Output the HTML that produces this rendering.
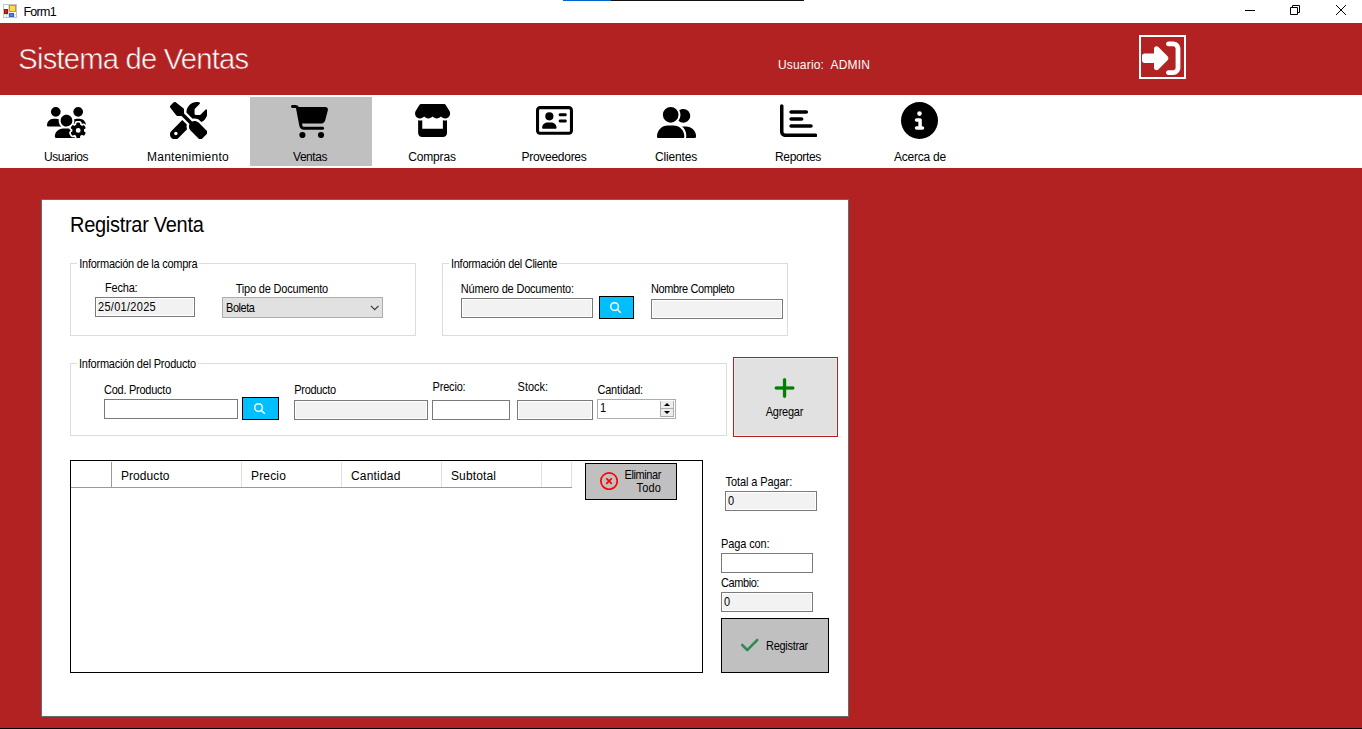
<!DOCTYPE html>
<html lang="es">
<head>
<meta charset="utf-8">
<title>Form1</title>
<style>
*{box-sizing:border-box;margin:0;padding:0}
html,body{width:1362px;height:729px;overflow:hidden;background:#b22222;font-family:"Liberation Sans",sans-serif;color:#000}
#win{position:absolute;left:0;top:0;width:1362px;height:729px;background:#b22222;overflow:hidden}
#win div,#win svg,#win i,#win b{position:absolute;display:block}
.t{white-space:pre}
#titlebar{left:0;top:0;width:1362px;height:23px;background:#fff}
.appico{left:3px;top:4px;width:14px;height:14px;border:1px solid #c2c2c2;background:#fff}
.appico .a{left:5px;top:0;width:7px;height:7px;background:#ffd65c;border:1px solid #c99a14}
.appico .b{left:0;top:4px;width:4px;height:5px;background:#c4281c;border:1px solid #a01208}
.appico .c{left:5px;top:8px;width:5px;height:4px;background:#4f86e0;border:1px solid #2f63c4}
.appico .d{left:4px;top:0;width:1px;height:12px;background:#d9d9d9}
.appico .e{left:0;top:9px;width:12px;height:1px;background:#dcdcdc}
.appico .f{left:2px;top:9px;width:9px;height:3px;border-left:1px solid #dcdcdc;border-right:1px solid #dcdcdc}
.tabline{left:563px;top:0;width:241px;height:1px;background:#111}
.tabline i{left:0;top:0;width:48px;height:1px;background:#0066cc}
#logout{left:1139px;top:35px;width:47px;height:44px;border:2px solid #fff}
#menu{left:0;top:95px;width:1362px;height:73px;background:#fff}
#sel{left:250px;top:97px;width:122px;height:69px;background:#c0c0c0}
#panel{left:41px;top:199px;width:808px;height:518px;background:#fff;border:1px solid #646c6d}
.gb{border:1px solid #dcdcdc}
.gbm{background:#fff}
.inp{border:1px solid #7a7a7a;background:#fff}
.inp.dis{background:#f2f2f2;box-shadow:inset 0 0 0 1px #fff}
.inp.nud{border-color:#abadb3}
.combo{background:#e1e1e1;border:1px solid #adadad}
.sbtn{background:#00bfff;border:1px solid #000}
.spin{background:#ededed;border-left:1px solid #adadad;border-right:1px solid #adadad;border-bottom:1px solid #adadad}
.spin b{left:0;top:7px;width:12px;height:1px;background:#adadad}
.spin i{left:3px;width:0;height:0;border-left:3px solid transparent;border-right:3px solid transparent}
.spin .u{top:2px;border-bottom:3px solid #000}
.spin .d{top:10px;border-top:3px solid #000}
.bigbtn{background:#e1e1e1;border:1px solid #b22222;box-shadow:inset 0 0 0 1px #e8ecec}
.gbtn{background:#c0c0c0;border:1px solid #000}
.grid{border:1px solid #000;background:#fff}
.grid .gh{left:0;top:0;width:501px;height:27px;border-bottom:1px solid #9a9a9a;background:#fff}
.grid i{top:1px;width:1px;height:25px;background:#e0e0e0}
.grid i:first-of-type{background:#9a9a9a}
#bottomline{left:0;top:728px;width:1362px;height:1px;background:#000}
</style>
</head>
<body>
<div id="win">
<div id="titlebar">
<div class="appico"><b class="d"></b><b class="e"></b><b class="f"></b><b class="a"></b><b class="b"></b><b class="c"></b></div>
<div class="tabline"><i></i></div>
<svg class="wc" style="left:1244px;top:4px;width:110px;height:14px" viewBox="0 0 110 14" fill="none" stroke="#000" stroke-width="1"><path d="M1 6.500H11"/><path d="M46.500 3.500V10.500H53.500V3.500ZM48.500 3.500V1.500H55.500V8.500H53.500"/><path d="M92 1L102 11M102 1L92 11"/></svg>
</div>
<div id="logout"></div>
<svg viewBox="0 0 512 512" style="left:1142.3px;top:39.3px;width:38.4px;height:38.4px" fill="#fff" ><path d="M217.900 105.900L340.700 228.700c7.200 7.200 11.300 17.100 11.300 27.300s-4.100 20.100-11.300 27.300L217.900 406.100c-6.400 6.400-15 9.900-24 9.900c-18.700 0-33.900-15.200-33.900-33.900l0-62.100L32 320c-17.700 0-32-14.300-32-32l0-64c0-17.700 14.300-32 32-32l128 0 0-62.100c0-18.700 15.200-33.900 33.900-33.900c9 0 17.600 3.600 24 9.900zM352 416l64 0c17.700 0 32-14.300 32-32l0-256c0-17.700-14.300-32-32-32l-64 0c-17.700 0-32-14.300-32-32s14.300-32 32-32l64 0c53 0 96 43 96 96l0 256c0 53-43 96-96 96l-64 0c-17.700 0-32-14.300-32-32s14.300-32 32-32z"/></svg>
<div id="menu"></div>
<div id="sel"></div>
<svg viewBox="0 0 640 512" style="left:46.7px;top:106.5px;width:39px;height:31.2px" fill="#000" ><path d="M144 160A80 80 0 1 0 144 0a80 80 0 1 0 0 160zm368 0A80 80 0 1 0 512 0a80 80 0 1 0 0 160zM0 298.700C0 310.400 9.600 320 21.300 320H234.700c.2 0 .4 0 .7 0c-26.600-23.500-43.300-57.800-43.300-96c0-7.600 .7-15 1.900-22.300c-13.600-6.300-28.700-9.700-44.600-9.700H106.700C47.800 192 0 239.800 0 298.700zM320 320c24 0 45.900-8.800 62.700-23.300c2.500-3.700 5.200-7.300 8-10.700c2.700-3.300 5.700-6.100 9-8.300C410 262.300 416 243.900 416 224c0-53-43-96-96-96s-96 43-96 96s43 96 96 96zm65.400 60.200c-10.300-5.900-18.100-16.200-20.800-28.200H261.300C187.700 352 128 411.700 128 485.300c0 14.700 11.900 26.700 26.700 26.700H455.200c-2.100-5.200-3.200-10.900-3.200-16.400v-3c-1.300-.7-2.700-1.500-4-2.300l-2.600 1.500c-16.800 9.700-40.500 8-54.700-9.700c-4.500-5.600-8.600-11.500-12.400-17.600l-.1-.2-.1-.2-2.400-4.100-.1-.2-.1-.2c-3.400-6.200-6.400-12.600-9-19.300c-8.200-21.200 2.200-42.600 19-52.300l2.700-1.500c0-.8 0-1.500 0-2.300s0-1.500 0-2.300l-2.700-1.500zM533.300 192H490.700c-15.900 0-31 3.500-44.600 9.700c1.300 7.200 1.900 14.700 1.900 22.300c0 17.400-3.500 33.900-9.700 49c2.500 .9 4.900 2 7.100 3.300l2.600 1.500c1.300-.8 2.600-1.600 4-2.300v-3c0-19.400 13.300-39.100 35.800-42.600c7.900-1.200 16-1.900 24.200-1.900s16.300 .6 24.200 1.900c22.500 3.500 35.800 23.200 35.800 42.600v3c1.300 .7 2.700 1.500 4 2.300l2.600-1.500c16.800-9.700 40.500-8 54.700 9.700c2.300 2.800 4.500 5.800 6.600 8.700c-2.100-57.100-49-102.700-106.600-102.700zm91.300 163.900c6.300-3.600 9.500-11.100 6.800-18c-2.100-5.500-4.600-10.800-7.400-15.900l-2.300-4c-3.100-5.100-6.500-9.900-10.200-14.500c-4.600-5.700-12.700-6.700-19-3L574.400 311c-8.900-7.600-19.100-13.600-30.400-17.600v-21c0-7.300-4.900-13.800-12.100-14.900c-6.500-1-13.100-1.500-19.900-1.500s-13.400 .5-19.900 1.500c-7.200 1.100-12.100 7.600-12.100 14.900v21c-11.200 4-21.500 10-30.400 17.600l-18.200-10.500c-6.300-3.600-14.400-2.600-19 3c-3.700 4.600-7.100 9.500-10.200 14.600l-2.300 3.900c-2.800 5.100-5.300 10.400-7.400 15.900c-2.600 6.800 .5 14.300 6.800 17.900l18.200 10.500c-1 5.700-1.600 11.600-1.600 17.600s.6 11.900 1.600 17.500l-18.200 10.500c-6.300 3.600-9.500 11.100-6.800 17.900c2.100 5.500 4.600 10.700 7.400 15.800l2.400 4.100c3 5.100 6.400 9.900 10.100 14.500c4.600 5.700 12.700 6.700 19 3L449.600 457c8.900 7.600 19.200 13.600 30.400 17.600v21c0 7.300 4.900 13.800 12.100 14.900c6.500 1 13.100 1.500 19.900 1.500s13.400-.5 19.900-1.500c7.200-1.100 12.100-7.600 12.100-14.900v-21c11.200-4 21.500-10 30.400-17.600l18.200 10.500c6.300 3.600 14.400 2.600 19-3c3.700-4.600 7.100-9.400 10.100-14.500l2.400-4.200c2.800-5.100 5.300-10.300 7.400-15.800c2.600-6.800-.5-14.300-6.800-17.900l-18.200-10.500c1-5.700 1.600-11.600 1.600-17.500s-.6-11.900-1.600-17.600l18.200-10.500zM472 384a40 40 0 1 1 80 0 40 40 0 1 1 -80 0z"/></svg>
<svg viewBox="0 0 512 512" style="left:169.58px;top:101.78px;width:37.45px;height:37.45px" fill="#000" ><path d="M78.6 5C69.1-2.4 55.600-1.500 47 7L7 47c-8.500 8.500-9.400 22-2.100 31.600l80 104c4.500 5.900 11.600 9.400 19 9.400h54.100l109 109c-14.700 29-10 65.400 14.300 89.600l112 112c12.500 12.500 32.800 12.500 45.300 0l64-64c12.500-12.500 12.500-32.800 0-45.300l-112-112c-24.200-24.200-60.600-29-89.600-14.300l-109-109V104c0-7.500-3.500-14.500-9.400-19L78.600 5zM19.900 396.100C7.200 408.800 0 426.100 0 444.100C0 481.600 30.400 512 67.900 512c18 0 35.300-7.200 48-19.900L233.700 374.300c-7.800-20.900-9-43.600-3.600-65.100l-61.700-61.700L19.900 396.100zM512 144c0-10.500-1.100-20.700-3.200-30.500c-2.400-11.200-16.100-14.100-24.200-6l-63.900 63.900c-3 3-7.100 4.700-11.300 4.700H352c-8.800 0-16-7.200-16-16V102.600c0-4.200 1.700-8.300 4.700-11.300l63.900-63.900c8.100-8.100 5.200-21.800-6-24.200C388.700 1.100 378.500 0 368 0C288.500 0 224 64.500 224 144l0 .8 85.300 85.300c36-9.100 75.800 .5 104 28.700L429 274.500c49-23 83-72.800 83-130.500zM56 432a24 24 0 1 1 48 0 24 24 0 1 1 -48 0z"/></svg>
<svg viewBox="0 0 576 512" style="left:291.05px;top:104.7px;width:37.3px;height:33.1px" fill="#000" ><path d="M0 24C0 10.700 10.700 0 24 0H69.500c22 0 41.500 12.800 50.600 32h411c26.300 0 45.500 25 38.600 50.400l-41 152.300c-8.500 31.400-37 53.300-69.500 53.300H170.700l5.400 28.500c2.200 11.300 12.100 19.500 23.600 19.500H488c13.300 0 24 10.700 24 24s-10.700 24-24 24H199.700c-34.600 0-64.300-24.600-70.700-58.500L77.400 54.500c-.7-3.800-4-6.500-7.900-6.500H24C10.700 48 0 37.300 0 24zM128 464a48 48 0 1 1 96 0 48 48 0 1 1 -96 0zm336-48a48 48 0 1 1 0 96 48 48 0 1 1 0-96z"/></svg>
<svg viewBox="0 0 576 512" style="left:414.03px;top:104.15px;width:37.15px;height:33.0px" fill="#000" ><path d="M547.600 103.800L490.300 13.100C485.200 5 476.100 0 466.400 0H109.600C99.900 0 90.800 5 85.700 13.100L28.300 103.800c-29.600 46.800-3.400 111.900 51.900 119.400c4 .5 8.100 .8 12.100 .8c26.100 0 49.300-11.400 65.200-29c15.900 17.600 39.100 29 65.200 29c26.100 0 49.300-11.400 65.200-29c15.900 17.600 39.100 29 65.200 29c26.200 0 49.300-11.400 65.200-29c16 17.600 39.100 29 65.200 29c4.100 0 8.100-.3 12.100-.8c55.500-7.400 81.800-72.500 52.100-119.400zM499.700 254.900l-.1 0c-5.300 .7-10.700 1.100-16.200 1.100c-12.400 0-24.300-1.900-35.400-5.300V384H128V250.600c-11.200 3.500-23.200 5.400-35.600 5.400c-5.500 0-11-.4-16.300-1.100l-.1 0c-4.100-.6-8.100-1.300-12-2.300V384v64c0 35.300 28.700 64 64 64H448c35.300 0 64-28.700 64-64V384 252.600c-4 1-8 1.800-12.300 2.300z"/></svg>
<svg viewBox="0 0 576 512" style="left:535.85px;top:104.2px;width:37px;height:32.9px" fill="#000" ><path d="M512 80c8.800 0 16 7.200 16 16V416c0 8.800-7.200 16-16 16H64c-8.800 0-16-7.200-16-16V96c0-8.800 7.200-16 16-16H512zM64 32C28.700 32 0 60.700 0 96V416c0 35.300 28.700 64 64 64H512c35.300 0 64-28.700 64-64V96c0-35.300-28.700-64-64-64H64zM208 256a64 64 0 1 0 0-128 64 64 0 1 0 0 128zm-32 32c-44.200 0-80 35.800-80 80c0 8.800 7.200 16 16 16H304c8.800 0 16-7.200 16-16c0-44.200-35.800-80-80-80H176zM376 144c-13.300 0-24 10.700-24 24s10.700 24 24 24h80c13.300 0 24-10.700 24-24s-10.700-24-24-24H376zm0 96c-13.300 0-24 10.700-24 24s10.700 24 24 24h80c13.300 0 24-10.700 24-24s-10.700-24-24-24H376z"/></svg>
<svg viewBox="0 0 640 512" style="left:656.65px;top:106.55px;width:39.1px;height:31.3px" fill="#000" ><path d="M96 128a128 128 0 1 1 256 0A128 128 0 1 1 96 128zM0 482.300C0 383.800 79.800 304 178.300 304h91.400C368.200 304 448 383.800 448 482.300c0 16.400-13.300 29.700-29.700 29.700H29.700C13.300 512 0 498.700 0 482.300zM609.300 512H471.400c5.400-9.400 8.600-20.300 8.600-32v-8c0-60.700-27.100-115.200-69.800-151.800c2.400-.1 4.700-.2 7.100-.2h61.400C567.800 320 640 392.200 640 481.300c0 17-13.800 30.700-30.700 30.700zM432 256c-31 0-59-12.600-79.300-32.900C372.400 196.500 384 163.600 384 128c0-26.800-6.600-52.100-18.300-74.300C384.300 40.100 407.200 32 432 32c61.900 0 112 50.100 112 112s-50.100 112-112 112z"/></svg>
<svg viewBox="0 0 512 512" style="left:779.7px;top:101.8px;width:37.4px;height:37.4px" fill="#000" ><path d="M24 32c13.300 0 24 10.700 24 24V408c0 13.300 10.700 24 24 24H488c13.300 0 24 10.700 24 24s-10.700 24-24 24H72c-39.800 0-72-32.200-72-72V56C0 42.700 10.700 32 24 32zM128 136c0-13.300 10.700-24 24-24l208 0c13.300 0 24 10.700 24 24s-10.700 24-24 24l-208 0c-13.300 0-24-10.700-24-24zm24 72H296c13.300 0 24 10.700 24 24s-10.700 24-24 24H152c-13.300 0-24-10.700-24-24s10.700-24 24-24zm0 96H424c13.300 0 24 10.700 24 24s-10.700 24-24 24H152c-13.300 0-24-10.700-24-24s10.700-24 24-24z"/></svg>
<svg viewBox="0 0 512 512" style="left:901.2px;top:102.0px;width:37px;height:37px" fill="#000" ><path d="M256 512A256 256 0 1 0 256 0a256 256 0 1 0 0 512zM216 336h24V272H216c-13.300 0-24-10.700-24-24s10.700-24 24-24h48c13.300 0 24 10.700 24 24v88h8c13.300 0 24 10.700 24 24s-10.700 24-24 24H216c-13.300 0-24-10.700-24-24s10.700-24 24-24zm40-208a32 32 0 1 1 0 64 32 32 0 1 1 0-64z"/></svg>
<div id="panel"></div>
<div class="gb" style="left:70px;top:263px;width:346px;height:73px"></div>
<div class="gbm" style="left:77.3px;top:263px;width:122px;height:1px"></div>
<div class="inp dis " style="left:95px;top:297px;width:100px;height:20px"></div>
<div class="combo" style="left:222px;top:297px;width:161px;height:21px"></div>
<svg style="left:369.500px;top:305px;width:10px;height:6px" viewBox="0 0 10 6" fill="none" stroke="#3c3c3c" stroke-width="1.25"><path d="M0.900 0.900L4.700 4.700L8.500 0.900"/></svg>
<div class="gb" style="left:442px;top:263px;width:346px;height:73px"></div>
<div class="gbm" style="left:449px;top:263px;width:110px;height:1px"></div>
<div class="inp dis " style="left:461px;top:298px;width:132px;height:20px"></div>
<div class="sbtn" style="left:599px;top:296px;width:35px;height:23px"></div>
<svg viewBox="0 0 512 512" style="left:610.4px;top:301.9px;width:11.2px;height:11.2px" fill="#fff" stroke="#fff" stroke-width="3"><path d="M416 208c0 45.900-14.900 88.300-40 122.700L502.600 457.400c12.500 12.500 12.500 32.800 0 45.300s-32.800 12.500-45.300 0L330.700 376c-34.400 25.200-76.800 40-122.700 40C93.100 416 0 322.900 0 208S93.100 0 208 0S416 93.100 416 208zM208 352a144 144 0 1 0 0-288 144 144 0 1 0 0 288z"/></svg>
<div class="inp dis " style="left:651px;top:299px;width:132px;height:20px"></div>
<div class="gb" style="left:70px;top:363px;width:657px;height:73px"></div>
<div class="gbm" style="left:77px;top:363px;width:121px;height:1px"></div>
<div class="inp " style="left:104px;top:399px;width:134px;height:20px"></div>
<div class="sbtn" style="left:242px;top:397px;width:37px;height:23px"></div>
<svg viewBox="0 0 512 512" style="left:254.4px;top:402.9px;width:11.2px;height:11.2px" fill="#fff" stroke="#fff" stroke-width="3"><path d="M416 208c0 45.900-14.900 88.300-40 122.700L502.600 457.400c12.500 12.500 12.500 32.800 0 45.300s-32.800 12.500-45.300 0L330.700 376c-34.400 25.200-76.800 40-122.700 40C93.100 416 0 322.900 0 208S93.100 0 208 0S416 93.100 416 208zM208 352a144 144 0 1 0 0-288 144 144 0 1 0 0 288z"/></svg>
<div class="inp dis " style="left:294px;top:400px;width:134px;height:20px"></div>
<div class="inp " style="left:432px;top:400px;width:78px;height:20px"></div>
<div class="inp dis " style="left:517px;top:400px;width:76px;height:20px"></div>
<div class="inp nud" style="left:597px;top:399px;width:79px;height:20px"></div>
<div class="spin" style="left:660px;top:401px;width:14px;height:16px"><b></b><i class="u"></i><i class="d"></i></div>
<div class="bigbtn" style="left:733px;top:357px;width:105px;height:80px"></div>
<svg viewBox="0 0 448 512" style="left:773.9px;top:376.25px;width:21.1px;height:24.1px" fill="#008000" stroke="#008000" stroke-width="6"><path d="M256 80c0-17.700-14.300-32-32-32s-32 14.300-32 32V224H48c-17.700 0-32 14.300-32 32s14.300 32 32 32H192V432c0 17.700 14.300 32 32 32s32-14.300 32-32V288H400c17.700 0 32-14.300 32-32s-14.300-32-32-32H256V80z"/></svg>
<div class="grid" style="left:70px;top:460px;width:633px;height:213px"><div class="gh"></div><i style="left:40px"></i><i style="left:170px"></i><i style="left:270px"></i><i style="left:370px"></i><i style="left:470px"></i><i style="left:500px" class="last"></i></div>
<div class="gbtn" style="left:585px;top:463px;width:92px;height:37px"></div>
<svg viewBox="0 0 512 512" style="left:600.35px;top:471.55px;width:18.1px;height:18.1px" fill="#ff0000" ><path d="M256 48a208 208 0 1 1 0 416 208 208 0 1 1 0-416zm0 464A256 256 0 1 0 256 0a256 256 0 1 0 0 512zM175 175c-9.400 9.400-9.400 24.600 0 33.900l47 47-47 47c-9.400 9.400-9.400 24.600 0 33.900s24.600 9.400 33.900 0l47-47 47 47c9.400 9.400 24.600 9.400 33.900 0s9.400-24.600 0-33.900l-47-47 47-47c9.400-9.400 9.400-24.600 0-33.900s-24.600-9.400-33.900 0l-47 47-47-47c-9.400-9.400-24.600-9.400-33.900 0z"/></svg>
<div class="inp dis " style="left:725px;top:491px;width:92px;height:20px"></div>
<div class="inp " style="left:721px;top:553px;width:92px;height:20px"></div>
<div class="inp dis " style="left:721px;top:592px;width:92px;height:20px"></div>
<div class="gbtn" style="left:721px;top:618px;width:108px;height:55px"></div>
<svg viewBox="0 0 448 512" style="left:741.3px;top:635.1px;width:17.5px;height:20px" fill="#2e8b57" ><path d="M438.600 105.400c12.500 12.500 12.500 32.800 0 45.300l-256 256c-12.500 12.500-32.800 12.500-45.300 0l-128-128c-12.500-12.500-12.500-32.800 0-45.300s32.800-12.500 45.300 0L160 338.700 393.400 105.400c12.500-12.500 32.800-12.500 45.300 0z"/></svg>
<div id="bottomline"></div>
<div class="t" style="top:6.22px;font-size:12.5px;line-height:12.5px;color:#000;letter-spacing:-0.705px;left:23.4px;">Form1</div>
<div class="t" style="top:44.73px;font-size:29.2px;line-height:29.2px;color:#fff;-webkit-text-stroke:0.55px #b22222;letter-spacing:-0.788px;left:18.3px;">Sistema de Ventas</div>
<div class="t" style="top:58.84px;font-size:12px;line-height:12px;color:#fff;letter-spacing:0.176px;left:778px;">Usuario:  ADMIN</div>
<div class="t" style="top:150.84px;font-size:12px;line-height:12px;color:#000;letter-spacing:-0.420px;left:-134px;width:400px;text-align:center;">Usuarios</div>
<div class="t" style="top:150.84px;font-size:12px;line-height:12px;color:#000;letter-spacing:0.252px;left:-12px;width:400px;text-align:center;">Mantenimiento</div>
<div class="t" style="top:150.84px;font-size:12px;line-height:12px;color:#000;letter-spacing:-0.451px;left:110px;width:400px;text-align:center;">Ventas</div>
<div class="t" style="top:150.84px;font-size:12px;line-height:12px;color:#000;letter-spacing:-0.170px;left:232px;width:400px;text-align:center;">Compras</div>
<div class="t" style="top:150.84px;font-size:12px;line-height:12px;color:#000;letter-spacing:-0.277px;left:354px;width:400px;text-align:center;">Proveedores</div>
<div class="t" style="top:150.84px;font-size:12px;line-height:12px;color:#000;letter-spacing:-0.170px;left:476px;width:400px;text-align:center;">Clientes</div>
<div class="t" style="top:150.84px;font-size:12px;line-height:12px;color:#000;letter-spacing:-0.338px;left:598px;width:400px;text-align:center;">Reportes</div>
<div class="t" style="top:150.84px;font-size:12px;line-height:12px;color:#000;letter-spacing:-0.226px;left:720px;width:400px;text-align:center;">Acerca de</div>
<div class="t" style="top:215.37px;font-size:20px;line-height:20px;color:#000;letter-spacing:-0.291px;transform:scaleY(1.06);transform-origin:0 84.65%;left:70px;">Registrar Venta</div>
<div class="t" style="top:259.04px;font-size:11px;line-height:11px;color:#000;letter-spacing:-0.255px;transform:scaleY(1.12);transform-origin:0 84.65%;left:79.3px;">Información de la compra</div>
<div class="t" style="top:283.04px;font-size:11px;line-height:11px;color:#000;letter-spacing:-0.190px;transform:scaleY(1.12);transform-origin:0 84.65%;left:105px;">Fecha:</div>
<div class="t" style="top:302.04px;font-size:11px;line-height:11px;color:#000;letter-spacing:0.294px;transform:scaleY(1.12);transform-origin:0 84.65%;left:98px;">25/01/2025</div>
<div class="t" style="top:284.04px;font-size:11px;line-height:11px;color:#000;letter-spacing:-0.194px;transform:scaleY(1.12);transform-origin:0 84.65%;left:235.7px;">Tipo de Documento</div>
<div class="t" style="top:303.04px;font-size:11px;line-height:11px;color:#000;letter-spacing:-0.451px;transform:scaleY(1.12);transform-origin:0 84.65%;left:226px;">Boleta</div>
<div class="t" style="top:259.04px;font-size:11px;line-height:11px;color:#000;letter-spacing:-0.283px;transform:scaleY(1.12);transform-origin:0 84.65%;left:451px;">Información del Cliente</div>
<div class="t" style="top:283.54px;font-size:11px;line-height:11px;color:#000;letter-spacing:-0.189px;transform:scaleY(1.12);transform-origin:0 84.65%;left:460.8px;">Número de Documento:</div>
<div class="t" style="top:283.54px;font-size:11px;line-height:11px;color:#000;letter-spacing:-0.398px;transform:scaleY(1.12);transform-origin:0 84.65%;left:651px;">Nombre Completo</div>
<div class="t" style="top:359.04px;font-size:11px;line-height:11px;color:#000;letter-spacing:-0.221px;transform:scaleY(1.12);transform-origin:0 84.65%;left:79px;">Información del Producto</div>
<div class="t" style="top:385.04px;font-size:11px;line-height:11px;color:#000;letter-spacing:-0.256px;transform:scaleY(1.12);transform-origin:0 84.65%;left:104px;">Cod. Producto</div>
<div class="t" style="top:385.04px;font-size:11px;line-height:11px;color:#000;letter-spacing:-0.316px;transform:scaleY(1.12);transform-origin:0 84.65%;left:294.3px;">Producto</div>
<div class="t" style="top:381.54px;font-size:11px;line-height:11px;color:#000;letter-spacing:-0.179px;transform:scaleY(1.12);transform-origin:0 84.65%;left:432.5px;">Precio:</div>
<div class="t" style="top:381.54px;font-size:11px;line-height:11px;color:#000;letter-spacing:-0.013px;transform:scaleY(1.12);transform-origin:0 84.65%;left:517.6px;">Stock:</div>
<div class="t" style="top:385.04px;font-size:11px;line-height:11px;color:#000;letter-spacing:-0.166px;transform:scaleY(1.12);transform-origin:0 84.65%;left:597.4px;">Cantidad:</div>
<div class="t" style="top:403.04px;font-size:11px;line-height:11px;color:#000;transform:scaleY(1.12);transform-origin:0 84.65%;left:600px;">1</div>
<div class="t" style="top:407.04px;font-size:11px;line-height:11px;color:#000;letter-spacing:-0.234px;transform:scaleY(1.12);transform-origin:0 84.65%;left:584.4px;width:400px;text-align:center;">Agregar</div>
<div class="t" style="top:470.14px;font-size:12px;line-height:12px;color:#000;letter-spacing:0.059px;left:121px;">Producto</div>
<div class="t" style="top:470.14px;font-size:12px;line-height:12px;color:#000;letter-spacing:0.164px;left:251px;">Precio</div>
<div class="t" style="top:470.14px;font-size:12px;line-height:12px;color:#000;letter-spacing:0.182px;left:351px;">Cantidad</div>
<div class="t" style="top:470.14px;font-size:12px;line-height:12px;color:#000;letter-spacing:0.119px;left:451px;">Subtotal</div>
<div class="t" style="top:470.04px;font-size:11px;line-height:11px;color:#000;letter-spacing:-0.404px;transform:scaleY(1.12);transform-origin:0 84.65%;left:261px;width:400px;text-align:right;">Eliminar</div>
<div class="t" style="top:483.04px;font-size:11px;line-height:11px;color:#000;letter-spacing:0.160px;transform:scaleY(1.12);transform-origin:0 84.65%;left:261px;width:400px;text-align:right;">Todo</div>
<div class="t" style="top:477.04px;font-size:11px;line-height:11px;color:#000;letter-spacing:-0.098px;transform:scaleY(1.12);transform-origin:0 84.65%;left:725.6px;">Total a Pagar:</div>
<div class="t" style="top:496.04px;font-size:11px;line-height:11px;color:#000;transform:scaleY(1.12);transform-origin:0 84.65%;left:728px;">0</div>
<div class="t" style="top:539.34px;font-size:11px;line-height:11px;color:#000;letter-spacing:-0.116px;transform:scaleY(1.12);transform-origin:0 84.65%;left:721px;">Paga con:</div>
<div class="t" style="top:578.04px;font-size:11px;line-height:11px;color:#000;letter-spacing:-0.424px;transform:scaleY(1.12);transform-origin:0 84.65%;left:721px;">Cambio:</div>
<div class="t" style="top:597.04px;font-size:11px;line-height:11px;color:#000;transform:scaleY(1.12);transform-origin:0 84.65%;left:724px;">0</div>
<div class="t" style="top:641.04px;font-size:11px;line-height:11px;color:#000;letter-spacing:-0.292px;transform:scaleY(1.12);transform-origin:0 84.65%;left:766px;">Registrar</div>
</div>
</body>
</html>
